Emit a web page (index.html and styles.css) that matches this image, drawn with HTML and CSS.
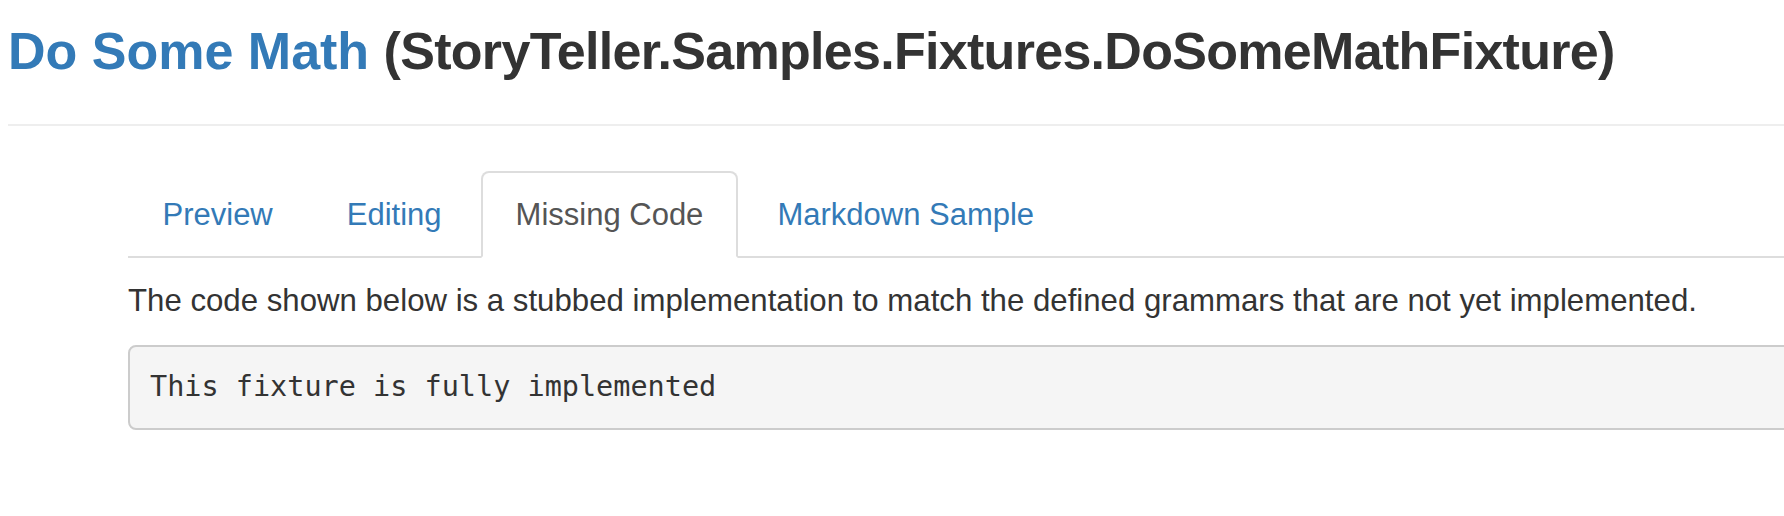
FILE: index.html
```html
<!DOCTYPE html>
<html>
<head>
<meta charset="utf-8">
<link rel="stylesheet" href="styles.css">
</head>
<body>
<div class="page">
  <div class="page-header">
    <h1><span class="title-link">Do Some Math</span> <span class="title-type">(StoryTeller.Samples.Fixtures.DoSomeMathFixture)</span></h1>
  </div>
  <div class="content">
    <ul class="nav-tabs">
      <li class="tab"><a>Preview</a></li>
      <li class="tab"><a>Editing</a></li>
      <li class="tab active"><a>Missing Code</a></li>
      <li class="tab"><a>Markdown Sample</a></li>
    </ul>
    <p class="lead-text">The code shown below is a stubbed implementation to match the defined grammars that are not yet implemented.</p>
    <pre class="code">This fixture is fully implemented</pre>
  </div>
</div>
</body>
</html>
```
FILE: styles.css
```css
html, body {
  margin: 0;
  padding: 0;
  background: #fff;
  overflow: hidden;
}
.page {
  width: 1784px;
  height: 516px;
  overflow: hidden;
  font-family: "Liberation Sans", Arial, sans-serif;
  color: #333;
}
.page-header {
  margin-left: 8px;
  padding-top: 23px;
  padding-bottom: 44px;
  border-bottom: 2px solid #eee;
}
h1 {
  margin: 0;
  font-size: 52px;
  line-height: 57px;
  font-weight: 700;
  color: #333;
  white-space: nowrap;
}
.title-link {
  color: #337ab7;
}
.title-type {
  letter-spacing: -0.7px;
}
.content {
  margin-left: 128px;
  width: 1800px;
  padding-top: 45px;
}
.nav-tabs {
  list-style: none;
  margin: 0;
  padding: 0;
  display: flex;
  border-bottom: 2px solid #ddd;
}
.tab {
  margin-right: 5px;
  margin-bottom: -2px;
}
.tab a {
  display: block;
  padding: 22px 32.5px 21px;
  border: 2px solid transparent;
  border-radius: 8px 8px 0 0;
  font-size: 31px;
  line-height: 40px;
  color: #337ab7;
}
.tab.active a {
  color: #555;
  background: #fff;
  border-color: #ddd;
  border-bottom-color: transparent;
}
.lead-text {
  margin: 23px 0 24px;
  font-size: 31.2px;
  line-height: 40px;
  color: #333;
  white-space: nowrap;
}
.code {
  margin: 0;
  padding: 20px 20px 21px;
  background: #f5f5f5;
  border: 2px solid #ccc;
  border-radius: 8px;
  font-family: "DejaVu Sans Mono", Menlo, monospace;
  font-size: 28.5px;
  line-height: 40px;
  color: #333;
}
```
